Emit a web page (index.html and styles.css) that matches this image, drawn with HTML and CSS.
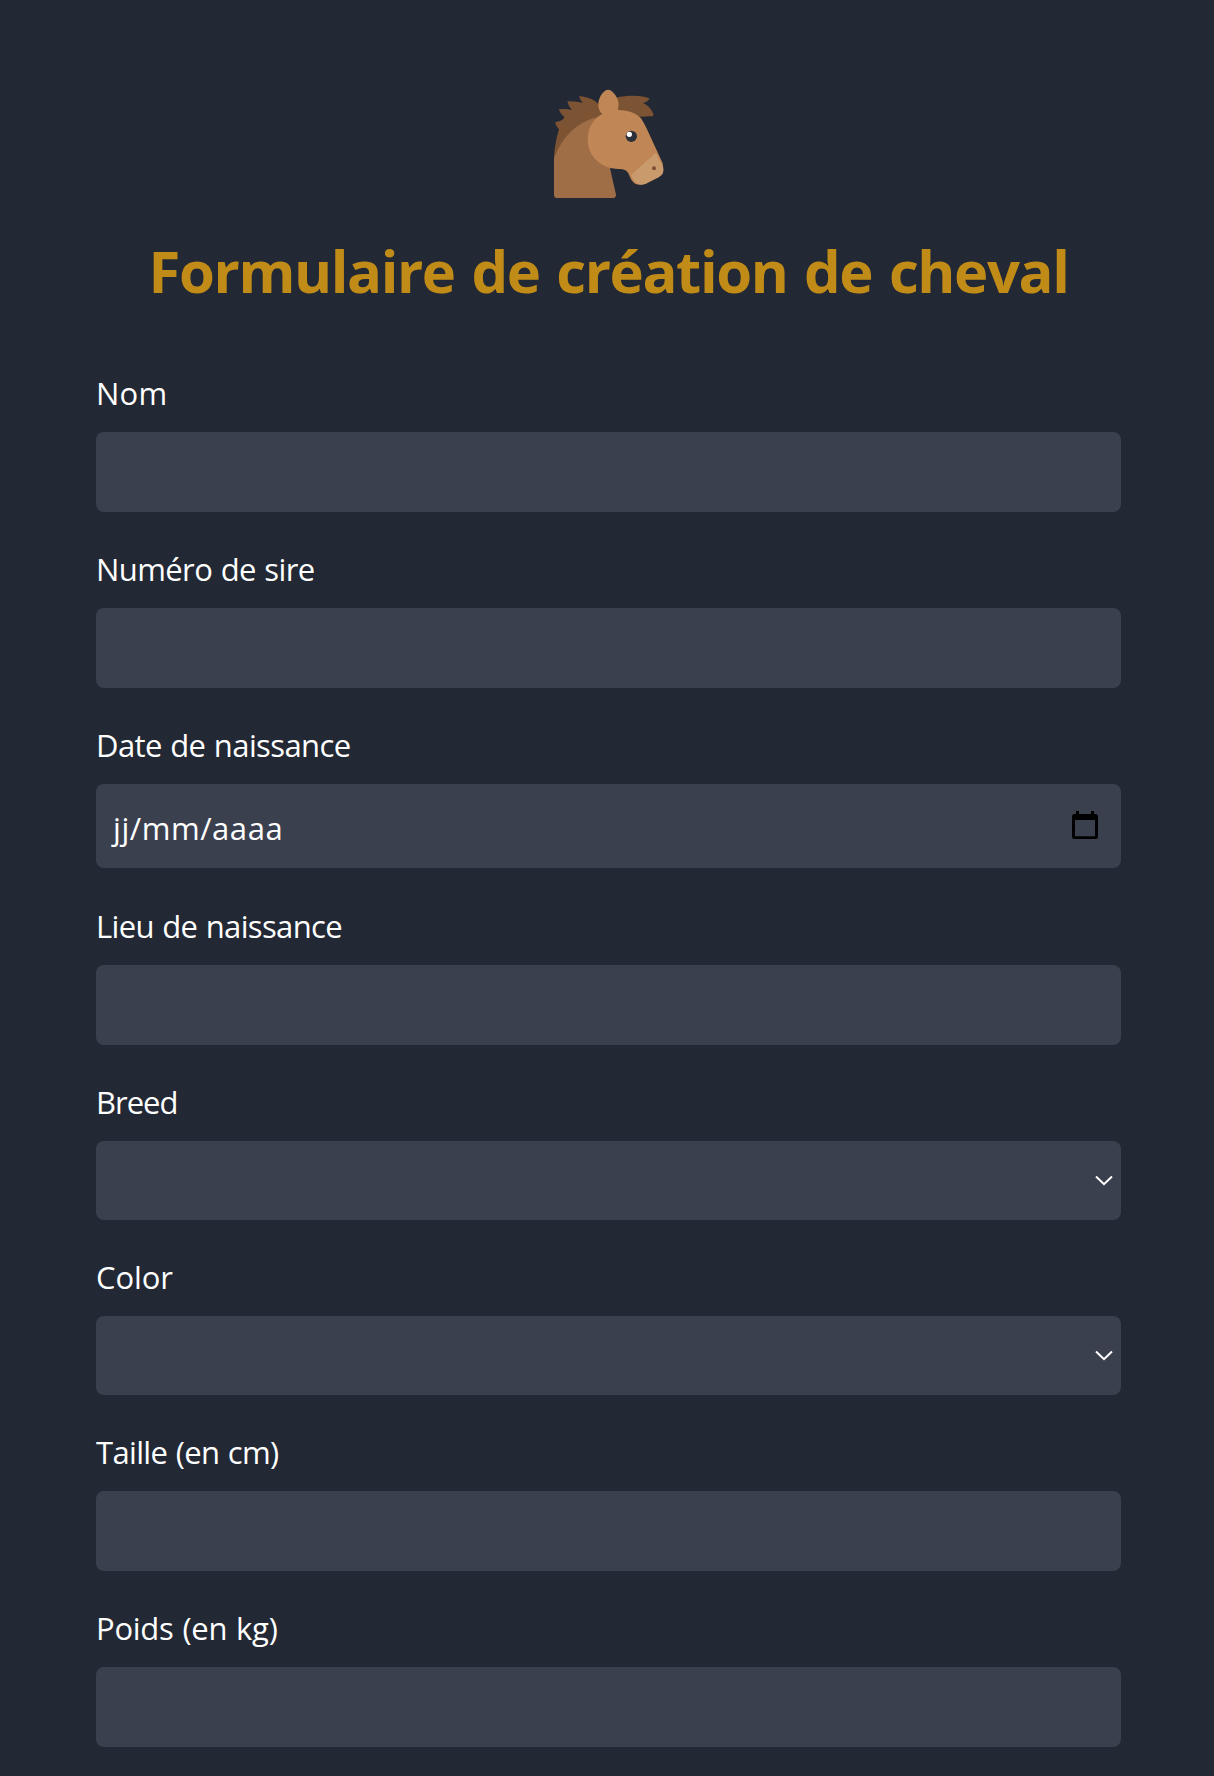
FILE: index.html
```html
<!DOCTYPE html>
<html lang="fr">
<head>
<meta charset="utf-8">
<title>Formulaire de création de cheval</title>
<link rel="stylesheet" href="styles.css">
</head>
<body>
<main class="page">
  <header class="header">
    <svg class="logo" viewBox="0 0 408 378" aria-hidden="true">
      <path fill="#7d5433" d="M188 101C184 67 154 52 118 48Q118 56 128 68Q105 64 82 64Q84 77 96 90Q79 85 57 88Q58 98 73 111Q71 122 46 127Q46 136 57 148C47 180 43 210 42 236L90 234L200 116Z"/>
      <path fill="#7d5433" d="M226 53C270 44 308 46 328 55Q326 65 309 69Q330 78 340 101Q342 110 331 109L303 110L234 98Z"/>
      <path fill="#9f6d46" d="M42 236C62 179 105 127 174 111L235 263L210 265L228 344Q228 354 218 354H52Q42 354 42 344Z"/>
      <path fill="#c18656" d="M205 29C220 30 237 57 236 75Q234 84 234 90C267 90 291 101 304 116Q314 132 321 148L368 250Q374 278 360 288L318 310Q282 325 269 289Q263 267 240 267C186 269 144 230 143 181C143 142 162 114 187 102Q174 92 175 69C177 51 190 29 205 29Z"/>
      <path fill="#c99a6c" d="M348 218L368 259Q376 282 356 292L318 311Q286 323 273 285Q302 258 348 218Z"/>
      <circle cx="274" cy="169" r="17" fill="#2b3039"/>
      <circle cx="268" cy="163" r="8" fill="#fff"/>
      <circle cx="342" cy="265" r="6" fill="#7d4f33"/>
    </svg>
    <h1 class="title">Formulaire de création de cheval</h1>
  </header>
  <form class="form">
    <div class="field"><label class="label label-nom" for="nom">Nom</label><input class="control" id="nom" type="text"></div>
    <div class="field"><label class="label label-sire" for="sire">Numéro de sire</label><input class="control" id="sire" type="text"></div>
    <div class="field field-date">
      <span class="label label-date">Date de naissance</span>
      <div class="control date">
        <span class="date-text">jj/mm/aaaa</span>
        <svg class="calendar" viewBox="0 0 26 28" aria-hidden="true"><path fill="#000" fill-rule="evenodd" d="M4 0H7V3H19V0H22V3H23.500Q26 3 26 5.500V25.500Q26 28 23.500 28H2.500Q0 28 0 25.500V5.500Q0 3 2.500 3H4ZM3 9V25.300H23V9Z"/></svg>
      </div>
    </div>
    <div class="field"><label class="label label-lieu" for="lieu">Lieu de naissance</label><input class="control" id="lieu" type="text"></div>
    <div class="field">
      <span class="label label-breed">Breed</span>
      <div class="control select"><svg class="chevron" viewBox="0 0 18 11" aria-hidden="true"><path d="M1 1.500L9 9.200L17 1.500"/></svg></div>
    </div>
    <div class="field">
      <span class="label label-color">Color</span>
      <div class="control select"><svg class="chevron" viewBox="0 0 18 11" aria-hidden="true"><path d="M1 1.500L9 9.200L17 1.500"/></svg></div>
    </div>
    <div class="field"><label class="label label-taille" for="taille">Taille (en cm)</label><input class="control" id="taille" type="text"></div>
    <div class="field"><label class="label label-poids" for="poids">Poids (en kg)</label><input class="control" id="poids" type="text"></div>
  </form>
</main>
</body>
</html>
```
FILE: styles.css
```css
* { box-sizing: border-box; }
html { background: #222834; }
body {
  margin: 0;
  height: 1776px;
  overflow: hidden;
  background: #222834;
  color: #fff;
  font-family: "Open Sans", "Noto Sans", sans-serif;
}
.page { padding: 80px 93px 29px 96px; }
.header { display: flex; flex-direction: column; align-items: center; }
.logo { display: block; width: 136px; height: 126px; margin-right: 2px; }
.title {
  margin: 35px 0 67px;
  font-size: 58px;
  line-height: 60px;
  font-weight: 700;
  letter-spacing: -1.4px;
  word-spacing: 3px;
  white-space: nowrap;
  color: #c08b17;
}
.form { display: flex; flex-direction: column; gap: 32px; }
.field { display: flex; flex-direction: column; gap: 16px; }
.field-date { margin-bottom: 1px; }
.label {
  height: 48px;
  padding-top: 1px;
  font-size: 31px;
  line-height: 48px;
}
.label-nom { letter-spacing: 0.2px; }
.label-sire { letter-spacing: -0.6px; word-spacing: 1px; }
.label-date { letter-spacing: -0.6px; word-spacing: 1px; }
.label-lieu { letter-spacing: -0.65px; word-spacing: 1px; }
.label-breed { letter-spacing: -1px; }
.label-color { letter-spacing: -0.1px; }
.label-taille { letter-spacing: -0.65px; word-spacing: 1px; }
.label-poids { letter-spacing: -0.25px; word-spacing: 1px; }
.control {
  width: 100%;
  height: 80px;
  padding: 16px;
  border: 0;
  border-radius: 8px;
  background: #3b404f;
  color: #fff;
  font: inherit;
}
.date {
  display: flex;
  align-items: center;
  justify-content: space-between;
  height: 84px;
  padding: 0 23px 0 17px;
}
.date-text {
  padding-top: 3px;
  font-size: 31px;
  line-height: 48px;
  letter-spacing: 0.55px;
}
.calendar { width: 26px; height: 28px; margin-bottom: 2px; }
.select {
  display: flex;
  align-items: center;
  justify-content: flex-end;
  height: 79px;
  padding: 0 8px;
}
.chevron {
  width: 18px;
  height: 11px;
  fill: none;
  stroke: #fff;
  stroke-width: 2;
}
```
